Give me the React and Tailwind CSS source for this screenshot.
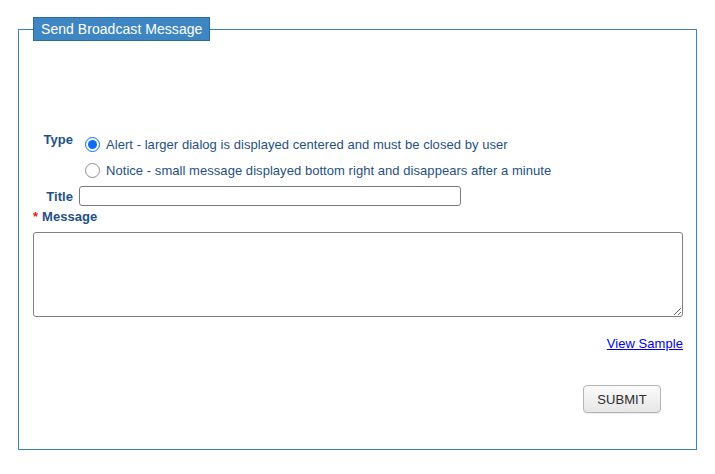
import React, { useState } from 'react';

const Radio = ({ checked, onClick }) => (
    <span
        onClick={onClick}
        className={
            checked
                ? 'w-[15px] h-[15px] rounded-full border-[1.5px] border-[#0b6cf5] bg-white flex items-center justify-center shrink-0'
                : 'w-[15px] h-[15px] rounded-full border border-[#8f8f8f] bg-white shrink-0'
        }
    >
        {checked && <span className="w-[9px] h-[9px] rounded-full bg-[#0b6cf5]" />}
    </span>
);

const App = () => {
    const [type, setType] = useState('alert');

    return (
        <div className="pl-[18px] pt-[17px] font-['Liberation_Sans',Arial,sans-serif] text-[13px] leading-[15px] tracking-[0.05px] text-[#1f4f86]">
            <fieldset className="w-[679px] h-[433px] border border-[#3b82bd] pl-[14px] pr-[13px]">
                <legend className="bg-[#3d86c3] border border-[#2c6aa0] text-white text-[14px] leading-[22px] px-[7px]">
                    Send Broadcast Message
                </legend>

                {/* Type */}
                <div className="flex mt-[90px]">
                    <div className="w-[46px] shrink-0 text-right pr-[6px] pt-[1px] font-bold">Type</div>
                    <div className="flex flex-col">
                        <label className="flex items-center h-[26px] pl-[6px] gap-[6px]" onClick={() => setType('alert')}>
                            <Radio checked={type === 'alert'} />
                            <span>Alert - larger dialog is displayed centered and must be closed by user</span>
                        </label>
                        <label className="flex items-center h-[26px] pl-[6px] gap-[6px]" onClick={() => setType('notice')}>
                            <Radio checked={type === 'notice'} />
                            <span>Notice - small message displayed bottom right and disappears after a minute</span>
                        </label>
                    </div>
                </div>

                {/* Title */}
                <div className="flex items-center mt-[3px]">
                    <div className="w-[46px] shrink-0 text-right pr-[6px] font-bold">Title</div>
                    <input type="text" className="w-[382px] h-5 border border-[#7a7a85] rounded-[3px] bg-white px-1 text-[13px] outline-none" />
                </div>

                {/* Message */}
                <div className="mt-[3px] font-bold">
                    <span className="text-[#e0201a] mr-[4px]">*</span>Message
                </div>
                <textarea className="block w-full h-[85px] mt-[8px] border border-[#7f7f88] rounded-[3px] bg-white p-1 text-[13px] outline-none" />

                <div className="flex justify-end mt-[19px]">
                    <a href="#" className="text-[#0000ee] underline">View Sample</a>
                </div>

                <div className="flex justify-end mt-[34px] mr-[22px]">
                    <button className="w-[78px] h-[28px] rounded-[4px] border border-[#b5b5b5] bg-gradient-to-b from-[#fbfbfb] to-[#e6e6e6] text-[#2b2b2b] text-[13px] shadow-[0_1px_1px_rgba(0,0,0,0.08)]">
                        SUBMIT
                    </button>
                </div>
            </fieldset>
        </div>
    );
};

export default App;
